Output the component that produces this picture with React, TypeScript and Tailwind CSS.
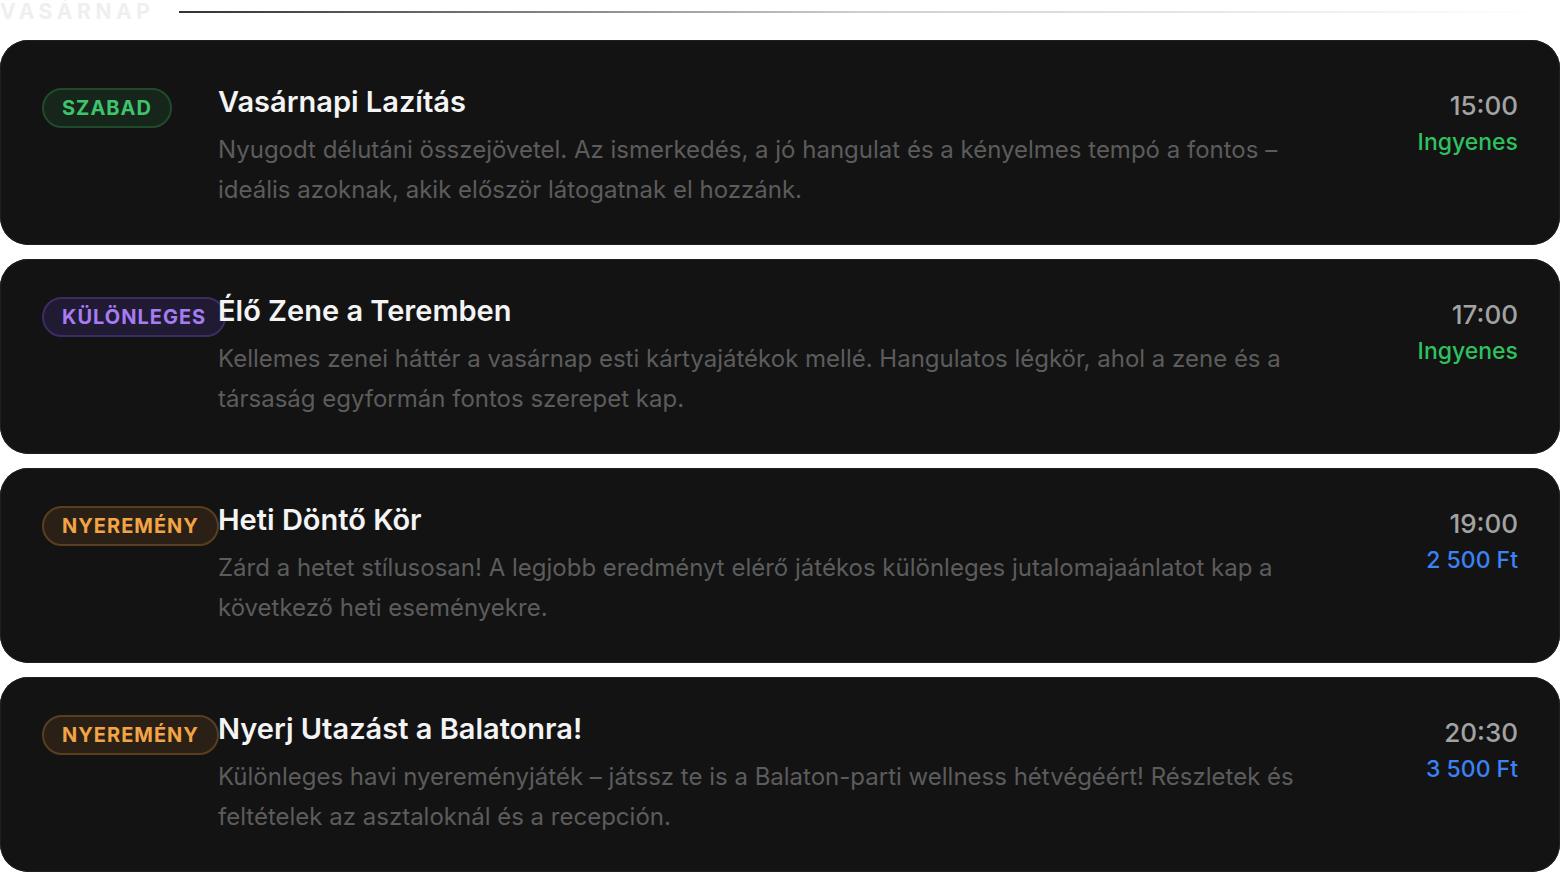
import React from 'react';

type Tone = 'green' | 'purple' | 'amber';

interface EventItem {
  badge: string;
  tone: Tone;
  title: string;
  description: string;
  time: string;
  price: string;
  priceTone: 'free' | 'paid';
}

const events: EventItem[] = [
  {
    badge: 'Szabad',
    tone: 'green',
    title: 'Vasárnapi Lazítás',
    description:
      'Nyugodt délutáni összejövetel. Az ismerkedés, a jó hangulat és a kényelmes tempó a fontos – ideális azoknak, akik először látogatnak el hozzánk.',
    time: '15:00',
    price: 'Ingyenes',
    priceTone: 'free',
  },
  {
    badge: 'Különleges',
    tone: 'purple',
    title: 'Élő Zene a Teremben',
    description:
      'Kellemes zenei háttér a vasárnap esti kártyajátékok mellé. Hangulatos légkör, ahol a zene és a társaság egyformán fontos szerepet kap.',
    time: '17:00',
    price: 'Ingyenes',
    priceTone: 'free',
  },
  {
    badge: 'Nyeremény',
    tone: 'amber',
    title: 'Heti Döntő Kör',
    description:
      'Zárd a hetet stílusosan! A legjobb eredményt elérő játékos különleges jutalomajaánlatot kap a következő heti eseményekre.',
    time: '19:00',
    price: '2 500 Ft',
    priceTone: 'paid',
  },
  {
    badge: 'Nyeremény',
    tone: 'amber',
    title: 'Nyerj Utazást a Balatonra!',
    description:
      'Különleges havi nyereményjáték – játssz te is a Balaton-parti wellness hétvégéért! Részletek és feltételek az asztaloknál és a recepción.',
    time: '20:30',
    price: '3 500 Ft',
    priceTone: 'paid',
  },
];

const badgeStyles: Record<Tone, string> = {
  green: 'text-[#3ec46d] bg-[#17261b] border-[#1f4a2c]',
  purple: 'text-[#a57cf2] bg-[#211a33] border-[#3b2d63]',
  amber: 'text-[#f2a446] bg-[#2a2015] border-[#5a3f1f]',
};

function EventCard({ item, first }: { item: EventItem; first?: boolean }) {
  return (
    <div
      className={`flex items-start rounded-[28px] bg-[#131313] shadow-[inset_0_0_0_1px_#202020] px-[42px] pb-[35px] ${
        first ? 'pt-[44px]' : 'pt-[34px]'
      }`}
    >
      <div className="w-[176px] shrink-0 pt-1">
        <span
          className={`inline-flex h-10 items-center whitespace-nowrap rounded-full border-2 px-[18px] text-[20px] font-bold uppercase tracking-[0.05em] ${badgeStyles[item.tone]}`}
        >
          {item.badge}
        </span>
      </div>
      <div className="min-w-0 flex-1">
        <h3 className="text-[29px] font-semibold leading-9 text-[#f4f4f4]">{item.title}</h3>
        <p className="mt-[10px] text-[24px] leading-10 text-[#5c5c5c]">{item.description}</p>
      </div>
      <div className="ml-10 flex w-[170px] shrink-0 flex-col items-end pt-1">
        <span className="text-[26px] font-medium leading-9 text-[#a3a3a3]">{item.time}</span>
        <span
          className={`mt-0.5 text-[23px] font-medium leading-8 ${
            item.priceTone === 'free' ? 'text-[#2fc15f]' : 'text-[#3b82f6]'
          }`}
        >
          {item.price}
        </span>
      </div>
    </div>
  );
}

export default function App() {
  return (
    <div className="min-h-screen bg-white font-['Inter',sans-serif]">
      <div className="flex h-[25px] items-center gap-6 -mt-[1px]">
        <span className="text-[21px] font-bold uppercase leading-none tracking-[0.22em] text-[#efefef]">
          Vasárnap
        </span>
        <div className="h-[2px] flex-1 mr-[14px] bg-gradient-to-r from-[#333] via-[#cfcfcf] to-transparent" />
      </div>
      <div className="mt-[16px] flex flex-col gap-[14px]">
        {events.map((e, i) => (
          <EventCard key={e.title} item={e} first={i === 0} />
        ))}
      </div>
    </div>
  );
}
